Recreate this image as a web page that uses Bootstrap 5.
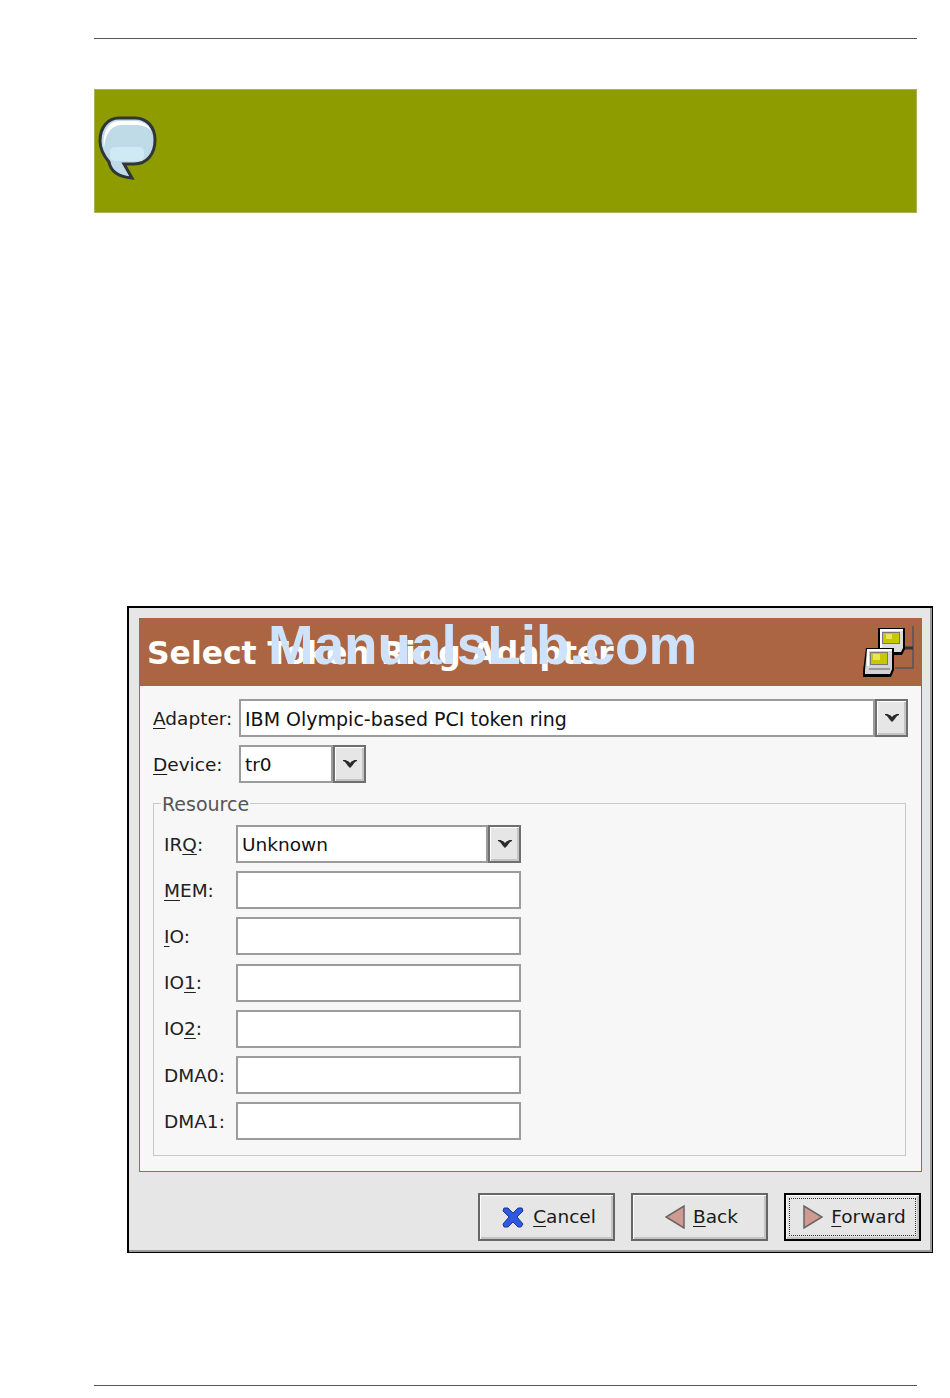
<!DOCTYPE html>
<html lang="en">
<head>
  <meta charset="UTF-8">
  <title>Select Token Ring Adapter</title>
  <link href="https://cdn.jsdelivr.net/npm/bootstrap@5.3.0/dist/css/bootstrap.min.css" rel="stylesheet">
  <style>
    body { background: #fff; font-family: "DejaVu Sans", sans-serif; color: #1a1a1a; margin: 0; }
    u { text-underline-offset: 3px; }
    .page-wrap { height: 1398px; padding: 38px 33px 0 94px; overflow: hidden; width: 950px; }
    .rule-top { border-top: 1px solid #555; height: 51px; }
    .note-box { height: 124px; background: #8e9c00; border: 1px solid #a9b550; padding: 26px 0 0 3px; }
    .win-frame { margin: 393px -16px 0 33px; width: 806px; height: 647px; border: 2px solid #000; border-width: 2px 1px 1px 2px; background: #e6e6e6; padding: 10px 10px 0 10px; position: relative; box-shadow: inset -2px -2px 0 #9a9a9a; }
    .win-body { height: 554px; background: #f7f7f7; border: 1px solid #ab6543; border-top: 0; }
    .title-bar { height: 68px; background: #ab6543; margin: 0 -1px; color: #fff; font-weight: 700; font-size: 31.4px; padding: 0 7px 0 8px; }
    .title-text { margin-top: 12px; white-space: nowrap; }
    .water-mark { position: absolute; left: 139px; top: 2px; font-family: "Liberation Sans", sans-serif; font-weight: 700; font-size: 54.8px; color: #cfe2fb; line-height: 70px; white-space: nowrap; }
    .form-area { padding: 13px 13px 0 13px; font-size: 18.5px; }
    .lbl-top { width: 86px; padding-top: 1px; }
    .gtk-entry { height: 38px; background: #fff; border: 2px solid #9c9c9c; padding-left: 4px; line-height: 36px; color: #111; white-space: nowrap; }
    .entry-wide { font-size: 19px; }
    .gtk-arrow { height: 38px; width: 33px; background: #e6e6e6; border: 2px solid #6f6f6f; box-shadow: inset 1px 1px 0 #fff, inset -2px -2px 0 #c4c4c4; }
    .res-frame { height: 353px; border: 1px solid #c8c8c8; margin: 20px 2px 0 0; position: relative; padding: 21px 0 0 10px; }
    .res-title { position: absolute; left: 7px; top: -10px; background: #f7f7f7; padding: 0 1px; line-height: 20px; color: #555; font-size: 19px; }
    .res-row { height: 38px; margin-bottom: 8.2px; }
    .res-lbl { width: 72px; color: #222; padding-top: 1px; }
    .res-field { width: 285px; }
    .btn-bar { padding: 21px 1px 0 0; gap: 16px; }
    .gtk-btn { width: 137px; height: 48px; background: #e6e6e6; border: 2px solid #666; border-radius: 0; font-size: 18.5px; color: #1a1a1a; padding: 0 0 0 4px; box-shadow: inset 1px 1px 0 #fff, inset -2px -2px 0 #c4c4c4; }
    .gtk-btn:hover { background: #e6e6e6; }
    .btn-focus { border-color: #000; outline: 1px dotted #333; outline-offset: -6px; }
    .rule-bottom { border-top: 1px solid #555; margin-top: 132px; }
  </style>
</head>
<body>
<div class="page-wrap">
  <div class="rule-top"></div>
  <div class="note-box">
    <svg width="60" height="66" viewBox="0 0 60 66">
      <path d="M21 2h16c12 0 20 9 20 22 0 14-8 24-21 24h-10l8 14c-12-1-21-5-23-16C6 40 2 33 2 25 2 11 10 2 21 2z" fill="#c0dbe8" stroke="#30353b" stroke-width="3"/>
      <path d="M6 32C4 15 11 5 22 5h15c7 0 12 3 16 9-4-3-9-5-16-5H23C13 9 7 19 6 32z" fill="#fff"/>
      <rect x="12" y="31" width="34" height="14" rx="5" fill="#cfe9f5"/>
    </svg>
  </div>

  <div class="win-frame">
    <div class="win-body">
      <div class="title-bar d-flex justify-content-between">
        <div class="title-text">Select Token Ring Adapter</div>
        <svg class="mt-2" width="52" height="52" viewBox="0 0 52 52">
          <path d="M50 0v42H32" fill="none" stroke="#555" stroke-width="1.5"/>
          <path d="M40 22h10" fill="none" stroke="#333" stroke-width="3"/>
          <path d="M15 2h27v21l-3 6H15z" fill="#000"/>
          <path d="M17 3h23v19l-2 4H17z" fill="#dcdcdc"/>
          <path d="M17 3h23v2H19v17h-2z" fill="#fff"/>
          <rect x="19" y="6" width="18" height="12" fill="#777"/>
          <rect x="20" y="7" width="16" height="10" fill="#c8c800"/>
          <rect x="23" y="8" width="6" height="5" fill="#e6e65a"/>
          <path d="M3 22h28v22l-3 7H0v-6z" fill="#000"/>
          <path d="M4 23h25v20l-2 5H2v-4z" fill="#d4d4d4"/>
          <path d="M4 23h25v2H6v15H4z" fill="#fff"/>
          <rect x="7" y="26" width="18" height="13" fill="#777"/>
          <rect x="8" y="27" width="16" height="11" fill="#c8c800"/>
          <rect x="10" y="28" width="7" height="6" fill="#e6e65a"/>
          <rect x="6" y="42" width="21" height="2" fill="#999"/>
        </svg>
      </div>
      <div class="form-area">
        <div class="d-flex align-items-center mb-2">
          <div class="lbl-top"><u>A</u>dapter:</div>
          <div class="gtk-entry entry-wide flex-grow-1">IBM Olympic-based PCI token ring</div>
          <div class="gtk-arrow d-flex align-items-center justify-content-center"><svg width="14" height="10" viewBox="0 0 14 10"><path d="M0 1h3l1 1h1l2 2 2-2h1l1-1h3v1l-2 1-3 4-2 2-2-2-3-4-2-1z" fill="#2a2a2a"/></svg></div>
        </div>
        <div class="d-flex align-items-center">
          <div class="lbl-top"><u>D</u>evice:</div>
          <div class="gtk-entry" style="width: 94px">tr0</div>
          <div class="gtk-arrow d-flex align-items-center justify-content-center"><svg width="14" height="10" viewBox="0 0 14 10"><path d="M0 1h3l1 1h1l2 2 2-2h1l1-1h3v1l-2 1-3 4-2 2-2-2-3-4-2-1z" fill="#2a2a2a"/></svg></div>
        </div>
        <div class="res-frame">
          <div class="res-title">Resource</div>
          <div class="res-row d-flex align-items-center">
            <div class="res-lbl">IR<u>Q</u>:</div>
            <div class="gtk-entry" style="width: 252px">Unknown</div>
            <div class="gtk-arrow d-flex align-items-center justify-content-center"><svg width="14" height="10" viewBox="0 0 14 10"><path d="M0 1h3l1 1h1l2 2 2-2h1l1-1h3v1l-2 1-3 4-2 2-2-2-3-4-2-1z" fill="#2a2a2a"/></svg></div>
          </div>
          <div class="res-row d-flex align-items-center"><div class="res-lbl"><u>M</u>EM:</div><div class="gtk-entry res-field"></div></div>
          <div class="res-row d-flex align-items-center"><div class="res-lbl"><u>I</u>O:</div><div class="gtk-entry res-field"></div></div>
          <div class="res-row d-flex align-items-center"><div class="res-lbl">IO<u>1</u>:</div><div class="gtk-entry res-field"></div></div>
          <div class="res-row d-flex align-items-center"><div class="res-lbl">IO<u>2</u>:</div><div class="gtk-entry res-field"></div></div>
          <div class="res-row d-flex align-items-center"><div class="res-lbl">DMA0:</div><div class="gtk-entry res-field"></div></div>
          <div class="res-row d-flex align-items-center"><div class="res-lbl">DMA1:</div><div class="gtk-entry res-field"></div></div>
        </div>
      </div>
    </div>
    <div class="btn-bar d-flex justify-content-end">
      <button type="button" class="btn gtk-btn d-flex align-items-center justify-content-center gap-2">
        <svg width="24" height="24" viewBox="0 0 24 24"><path d="M3 3h4l5 5 5-5h4l1 3-6 6 6 7-2 3h-3l-5-5-5 5H3l-1-3 6-7-6-6z" fill="#2f58e0" stroke="#1d3596"/></svg>
        <span><u>C</u>ancel</span>
      </button>
      <button type="button" class="btn gtk-btn d-flex align-items-center justify-content-center gap-2">
        <svg width="20" height="24" viewBox="0 0 20 24"><path d="M19 1v22L1 12z" fill="#d09a90" stroke="#666" stroke-width="1.5"/></svg>
        <span><u>B</u>ack</span>
      </button>
      <button type="button" class="btn gtk-btn btn-focus d-flex align-items-center justify-content-center gap-2">
        <svg width="20" height="24" viewBox="0 0 20 24"><path d="M1 1v22l18-11z" fill="#d09a90" stroke="#666" stroke-width="1.5"/></svg>
        <span><u>F</u>orward</span>
      </button>
    </div>
    <div class="water-mark">ManualsLib.com</div>
  </div>
  <div class="rule-bottom"></div>
</div>
<script src="https://cdn.jsdelivr.net/npm/bootstrap@5.3.0/dist/js/bootstrap.bundle.min.js"></script>
</body>
</html>
